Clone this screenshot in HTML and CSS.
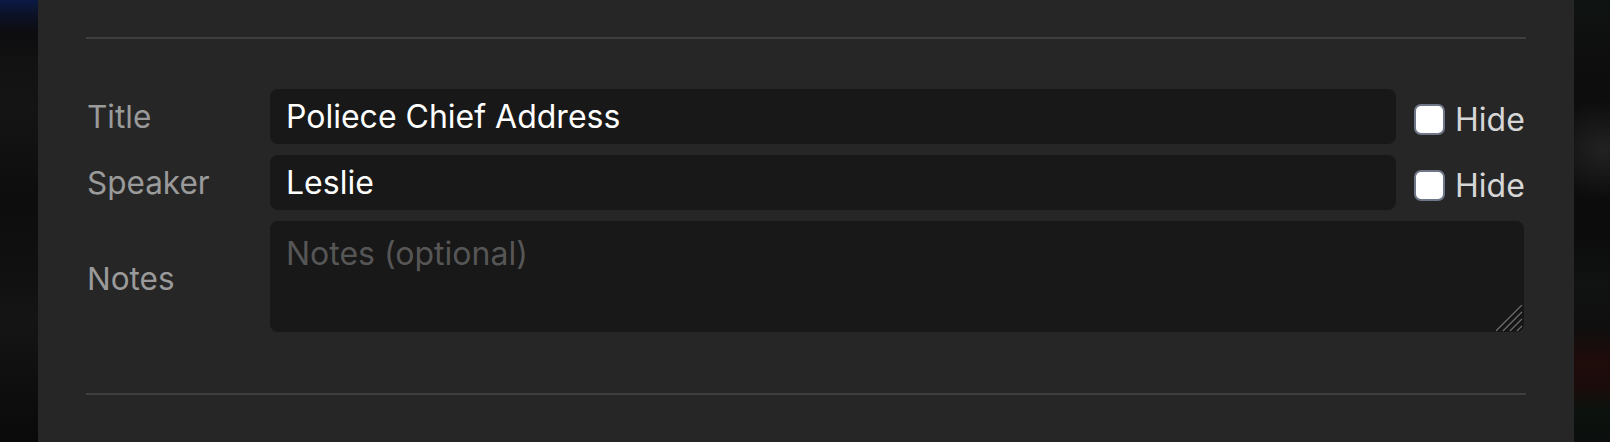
FILE: index.html
```html
<!DOCTYPE html>
<html lang="en">
<head>
<meta charset="utf-8">
<title>Segment editor</title>
<link rel="stylesheet" href="styles.css">
</head>
<body>
<div class="stage">
  <div class="side side-left"></div>
  <section class="panel">
    <div class="rule"></div>
    <form class="fields">
      <label class="label" for="title">Title</label>
      <input class="field" id="title" type="text" value="Poliece Chief Address">
      <label class="hide"><input class="check" type="checkbox"><span>Hide</span></label>

      <label class="label" for="speaker">Speaker</label>
      <input class="field" id="speaker" type="text" value="Leslie">
      <label class="hide"><input class="check" type="checkbox"><span>Hide</span></label>

      <label class="label label-notes" for="notes">Notes</label>
      <div class="notes-wrap">
        <textarea class="field notes" id="notes" placeholder="Notes (optional)"></textarea>
        <svg class="grip" width="27" height="27" viewBox="0 0 27 27" aria-hidden="true">
          <g stroke="#0f0f0f" stroke-width="1.2">
            <line x1="1" y1="27" x2="27" y2="1"/>
            <line x1="8" y1="27" x2="27" y2="8"/>
            <line x1="15" y1="27" x2="27" y2="15"/>
            <line x1="22" y1="27" x2="27" y2="22"/>
          </g>
          <g stroke="#6c6c6c" stroke-width="1.3">
            <line x1="0" y1="26" x2="26" y2="0"/>
            <line x1="7" y1="26" x2="26" y2="7"/>
            <line x1="14" y1="26" x2="26" y2="14"/>
            <line x1="21" y1="26" x2="26" y2="21"/>
          </g>
        </svg>
      </div>
    </form>
    <div class="rule rule-bottom"></div>
  </section>
  <div class="side side-right"></div>
</div>
</body>
</html>
```
FILE: styles.css
```css
html, body {
  margin: 0;
  padding: 0;
  height: 100%;
  background: #0c0c0c;
  font-family: Inter, "Noto Sans", sans-serif;
}

.stage {
  display: flex;
  height: 442px;
  overflow: hidden;
}

.side-left {
  flex: 0 0 38px;
  background:
    linear-gradient(180deg, #0b1a45 0px, #0c1228 14px, #0d0d10 32px, rgba(13,13,13,0) 60px),
    linear-gradient(180deg, #0f0f0f 0%, #141414 25%, #0d0d0d 45%, #111 65%, #151515 72%, #0d0d0d 90%, #0a0a0a 100%);
}

.side-right {
  flex: 1 1 0;
  background:
    radial-gradient(60px 50px at 30px 150px, rgba(40,40,40,0.8), rgba(40,40,40,0) 100%),
    linear-gradient(180deg, #0f1412 0px, #0e0e0e 60px, #0c0c0c 160px, #0c0c0c 240px, #101312 285px, #100e0e 330px, #1f0c0b 360px, #1b0c0b 385px, #0c120e 410px, #0c0f0d 442px);
}

.panel {
  flex: 0 0 1536px;
  box-sizing: border-box;
  padding: 37px 48px 0;
  background: #262626;
}

.rule {
  height: 2px;
  background: #3e3e3e;
}

.rule-bottom {
  margin-top: 61px;
}

.fields {
  margin: 50px 0 0;
  display: grid;
  grid-template-columns: 184px 1fr 130px;
  grid-template-rows: 55px 55px 111px;
  row-gap: 11px;
}

.label {
  align-self: center;
  padding-left: 1px;
  font-size: 31.5px;
  color: #9a9a9a;
}

.label-notes {
  padding-top: 4px;
}

.field {
  box-sizing: border-box;
  width: 100%;
  height: 100%;
  margin: 0;
  border: none;
  outline: none;
  border-radius: 8px;
  background: #181818;
  color: #ffffff;
  font-family: Inter, "Noto Sans", sans-serif;
  font-size: 32px;
  padding: 0 16px;
}

.notes-wrap {
  grid-column: 2 / 4;
  position: relative;
  margin-right: 2px;
}

.notes {
  display: block;
  padding: 13px 16px;
  line-height: normal;
  resize: none;
}

.notes::placeholder {
  color: #565656;
}

.grip {
  position: absolute;
  right: 1px;
  bottom: 0;
  display: block;
}

.hide {
  display: flex;
  align-items: center;
  padding: 6px 0 0 18px;
  font-size: 32px;
  color: #d6d6d6;
}

.check {
  appearance: none;
  -webkit-appearance: none;
  box-sizing: border-box;
  width: 31px;
  height: 31px;
  margin: 0 10px 0 0;
  background: #ffffff;
  border: 2px solid #6e7687;
  border-radius: 7px;
}
```
